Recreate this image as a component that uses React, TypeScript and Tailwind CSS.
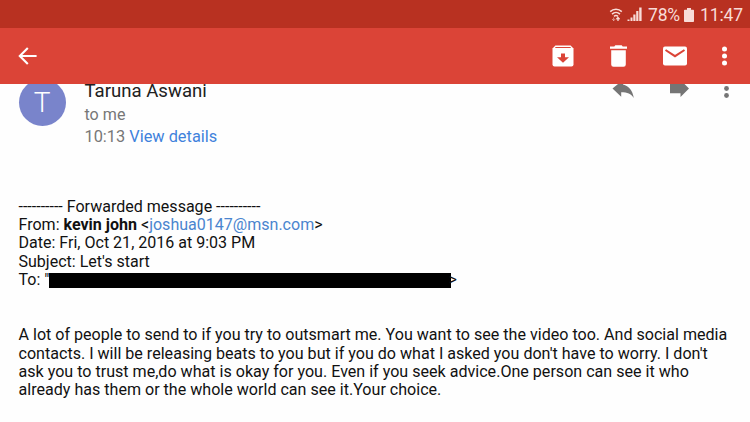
import React from "react";

const StatusBar = () => {
  return (
    <div className="flex h-7 items-center justify-end bg-[#b83121] pt-px pr-[7px] text-[#f8dcd8]">
      <svg className="mr-1 h-4 w-[15px]" viewBox="0 0 15 16" fill="none" stroke="currentColor">
        <path d="M2.2 4.6C5.5 1.4 10.5 1.4 13.8 4.6" strokeWidth="1.5" />
        <path d="M4 7.1C6.3 5 9.7 5 12 7.1" strokeWidth="1.5" />
        <path d="M6 9.3C7.2 8.3 8.8 8.3 10 9.3" strokeWidth="1.5" />
        <path d="M5.7 10.5v3M4.2 12.1l1.5 1.6 1.5-1.6" strokeWidth="1" opacity=".6" />
        <path d="M10 14v-3M8.4 12.2l1.6-1.7 1.6 1.7" strokeWidth="1.3" />
      </svg>
      <svg className="mr-[6px] h-[15px] w-[15px]" viewBox="0 0 15 15" fill="currentColor">
        <path d="M.5 12.5h2V14h-2zM3.5 10.5h2V14h-2zM6.3 7.5h2.2V14H6.3zM9.2 4h2.2v10H9.2zM12.2 .5h2.4V14h-2.4z" />
      </svg>
      <span className="mr-[3px] w-[33px] text-[17.5px] leading-7 tracking-[-0.2px] whitespace-nowrap">78%</span>
      <svg className="mr-[6px] h-[14px] w-[10px]" viewBox="0 0 10 14" fill="currentColor">
        <path d="M3 0h4v1.8h2.2a.8.8 0 0 1 .8.8v10.6a.8.8 0 0 1-.8.8H.8a.8.8 0 0 1-.8-.8V2.6a.8.8 0 0 1 .8-.8H3z" />
      </svg>
      <span className="w-[43px] text-[17.5px] leading-7 tracking-[-0.1px] whitespace-nowrap">11:47</span>
    </div>
  );
};

const Toolbar = () => {
  return (
    <div className="flex h-14 items-center bg-[#db4437] pr-[23px] pl-[18px] text-white">
      <svg className="h-[18px] w-[19px]" viewBox="0 0 19 18" fill="none" stroke="currentColor" strokeWidth="2.1">
        <path d="M18.6 9H2M9.8 1 1.8 9l8 8" />
      </svg>
      <svg className="ml-auto h-[22px] w-[22px]" viewBox="0 0 22 22">
        <path fill="currentColor" d="M3.4.5h15.2L21.5 3.4v16a2 2 0 0 1-2 2h-17a2 2 0 0 1-2-2v-16z" />
        <path fill="#db4437" d="M3.6 2.1h14.8l.6.9H3zM9 8.6h4v3.7h4l-6 5.4-6-5.4h4z" />
      </svg>
      <svg className="ml-9 h-[22px] w-[17px]" viewBox="0 0 17 22" fill="currentColor">
        <path d="M5.3.3h6.4l1 1.1H17v2.3H0V1.4h4.3zM1.2 5.2h14.6v14.3a2.3 2.3 0 0 1-2.3 2.3h-10a2.3 2.3 0 0 1-2.3-2.3z" />
      </svg>
      <svg className="ml-9 h-5 w-6" viewBox="0 0 24 20">
        <rect fill="currentColor" y=".5" width="24" height="19" rx="2" />
        <path d="M2.5 4 12 10.2 21.5 4" fill="none" stroke="#db4437" strokeWidth="2" />
      </svg>
      <svg className="ml-[35px] h-5 w-[5px]" viewBox="0 0 5 20" fill="currentColor">
        <circle cx="2.5" cy="3" r="2.5" />
        <circle cx="2.5" cy="10" r="2.5" />
        <circle cx="2.5" cy="17" r="2.5" />
      </svg>
    </div>
  );
};

// the list is scrolled a little, so the avatar and the name slide under the toolbar
const Sender = () => {
  return (
    <div className="flex h-[64px] items-start pl-[18.5px]">
      <div className="-mt-[5px] flex h-[47px] w-[47px] items-center justify-center rounded-full bg-[#7984cb] pt-px text-[28px] font-light text-white">
        T
      </div>
      <div className="ml-[19px] flex flex-col whitespace-nowrap">
        <span className="h-[19px] text-[18.6px] leading-[14px] text-[#212121]">Taruna Aswani</span>
        <span className="h-[23px] text-[16.1px] leading-[23px] text-[#777]">to me</span>
        <span className="h-[22px] text-[16.35px] leading-[22px] text-[#777]">
          10:13 <span className="text-[#3f82dc]">View details</span>
        </span>
      </div>
      <div className="mr-[21px] ml-auto flex items-start text-[#757575]">
        <svg className="h-[14px] w-[22px]" viewBox="0 0 22 14" fill="currentColor">
          <path d="M.5 4.5 6 0h5v.6C17 2 20.5 6.5 21.8 14 19 9.8 15.5 8.2 9.2 8.2v4.5z" />
        </svg>
        <svg className="ml-9 h-[14px] w-[19px]" viewBox="0 0 19 14" fill="currentColor">
          <path d="M0 0h14.5L19 4.5 10.5 13V9.2H0z" />
        </svg>
        <svg className="ml-[35px] h-[14px] w-[5px]" viewBox="0 0 5 14" fill="currentColor">
          <circle cx="2.5" cy="4.5" r="2.4" />
          <circle cx="2.5" cy="11.5" r="2.4" />
        </svg>
      </div>
    </div>
  );
};

const Message = () => {
  return (
    <div className="mt-[49.6px] pl-[18.5px] text-[16.05px] leading-[18.4px] whitespace-nowrap text-[#111]">
      <p>---------- Forwarded message ----------</p>
      <p>
        From: <b className="font-bold">kevin john</b> &lt;
        <span className="text-[#4a85cf]">joshua0147@msn.com</span>&gt;
      </p>
      <p>Date: Fri, Oct 21, 2016 at 9:03 PM</p>
      <p>Subject: Let's start</p>
      <p className="flex items-center">
        <span className="w-[30.5px]">To: "</span>
        <span className="h-[15px] w-[401.5px] bg-black" />
        <span className="-ml-[2px]">&gt;</span>
      </p>
      <div className="mt-[36.6px] text-[16.08px]">
        <p>A lot of people to send to if you try to outsmart me. You want to see the video too. And social media</p>
        <p>contacts. I will be releasing beats to you but if you do what I asked you don't have to worry. I don't</p>
        <p>ask you to trust me,do what is okay for you. Even if you seek advice.One person can see it who</p>
        <p>already has them or the whole world can see it.Your choice.</p>
      </div>
    </div>
  );
};

const App = () => {
  return (
    <main className="h-[422px] w-[750px] overflow-hidden bg-[#fefefe] font-[Roboto,sans-serif]">
      <StatusBar />
      <Toolbar />
      <section className="h-[338px] overflow-hidden">
        <Sender />
        <Message />
      </section>
    </main>
  );
};

export default App;
